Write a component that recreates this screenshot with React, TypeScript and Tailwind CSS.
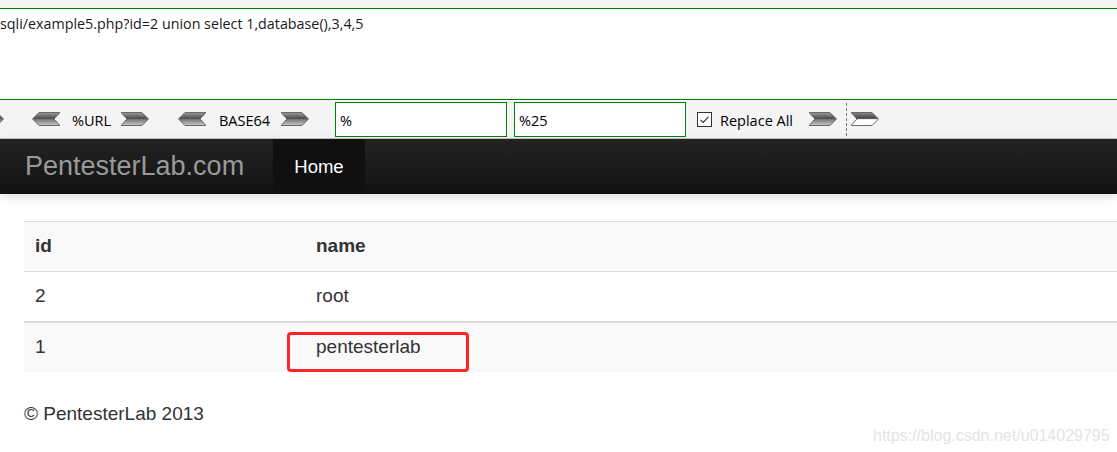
import React from 'react';

const ui = { fontFamily: '"Open Sans", "Noto Sans", sans-serif' };
const web = { fontFamily: '"Liberation Sans", Arial, sans-serif' };

function Arrow({ dir, hollow = false }: { dir: 'left' | 'right'; hollow?: boolean }) {
  const pts = dir === 'left' ? '7,0.5 28,0.5 22,7 28,13.5 7,13.5 0.5,7' : '0,0.5 21,0.5 27.5,7 21,13.5 0,13.5 6,7';
  const id = hollow ? 'arrHollow' : 'arrFill';
  return (
    <svg width="28" height="14" viewBox="0 0 28 14" className="shrink-0">
      <defs>
        <linearGradient id="arrFill" x1="0" y1="0" x2="0" y2="1">
          <stop offset="0" stopColor="#9c9c9c" />
          <stop offset="0.45" stopColor="#4f4f4f" />
          <stop offset="0.55" stopColor="#7c7c7c" />
          <stop offset="1" stopColor="#c9c9c9" />
        </linearGradient>
        <linearGradient id="arrHollow" x1="0" y1="0" x2="0" y2="1">
          <stop offset="0" stopColor="#8a8a8a" />
          <stop offset="0.45" stopColor="#444444" />
          <stop offset="0.55" stopColor="#ffffff" />
          <stop offset="1" stopColor="#ffffff" />
        </linearGradient>
      </defs>
      <polygon points={pts} fill={`url(#${id})`} stroke="#6a6a6a" strokeWidth="1" />
    </svg>
  );
}

export default function App() {
  return (
    <div className="relative w-[1117px] h-[452px] overflow-hidden bg-white">
      {/* browser chrome */}
      <div className="h-[8px] bg-[#f4f4f4]" />
      <div className="h-[92px] border-y border-[#008000] bg-white text-[14.3px] text-[#1a1a1a] pt-[4px] whitespace-nowrap" style={ui}>
        sqli/example5.php?id=2 union select 1,database(),3,4,5
      </div>

      {/* hackbar toolbar */}
      <div className="h-[39px] bg-[#f4f4f4] border-b border-[#c3c3c3] flex items-center text-[14.5px] text-black whitespace-nowrap" style={ui}>
        <div className="w-[4px] overflow-hidden ml-0 shrink-0">
          <div className="-ml-[24px]">
            <Arrow dir="right" />
          </div>
        </div>
        <div className="ml-[28px]"><Arrow dir="left" /></div>
        <span className="ml-[12px] w-[49px] pt-[3px]">%URL</span>
        <Arrow dir="right" />
        <div className="ml-[29px]"><Arrow dir="left" /></div>
        <span className="ml-[13px] w-[62px] pt-[3px]">BASE64</span>
        <Arrow dir="right" />
        <div className="ml-[26px] w-[172px] h-[35px] border border-[#008000] bg-white flex items-center px-[4px] pt-[3px]">%</div>
        <div className="ml-[7px] w-[172px] h-[35px] border border-[#008000] bg-white flex items-center px-[4px] pt-[3px]">%25</div>
        <div className="ml-[11px] w-[15px] h-[15px] border border-[#333] bg-white flex items-center justify-center">
          <svg width="11" height="11" viewBox="0 0 11 11">
            <path d="M1.5 5.8 L4.2 8.4 L9.6 2.6" fill="none" stroke="#333" strokeWidth="1.1" />
          </svg>
        </div>
        <span className="ml-[8px] w-[89px] pt-[3px]">Replace All</span>
        <Arrow dir="right" />
        <div className="ml-[9px] h-[33px] border-l border-dashed border-[#777]" />
        <div className="ml-[4px]"><Arrow dir="right" hollow /></div>
      </div>

      {/* navbar */}
      <div className="relative z-10 h-[55px] bg-gradient-to-b from-[#232323] to-[#121212] flex items-stretch shadow-[0_3px_10px_rgba(0,0,0,0.12)]" style={web}>
        <div className="pl-[25px] w-[273px] flex items-center text-[27px] text-[#999]">PentesterLab.com</div>
        <div className="w-[92px] bg-[#101010] flex items-center justify-center text-[18.5px] text-white">Home</div>
      </div>

      {/* content */}
      <div className="pl-[24px] pt-[27px] text-[19px] text-[#333]" style={web}>
        <div className="w-[1170px] border-t border-[#ddd]">
          <div className="flex h-[50px] items-center bg-[#f9f9f9] font-bold border-b border-[#ddd]">
            <div className="w-[281px] px-[11px]">id</div>
            <div className="px-[11px]">name</div>
          </div>
          <div className="flex h-[49px] items-center bg-white">
            <div className="w-[281px] px-[11px]">2</div>
            <div className="px-[11px]">root</div>
          </div>
          <div className="flex h-[51px] items-center bg-[#f9f9f9] border-t-2 border-[#ddd]">
            <div className="w-[281px] px-[11px]">1</div>
            <div className="px-[11px]">pentesterlab</div>
          </div>
        </div>
        <div className="pt-[28px]">© PentesterLab 2013</div>
      </div>

      {/* annotation */}
      <div className="absolute left-[287px] top-[332px] w-[182px] h-[40px] border-[3px] border-[#ff2323] rounded-[4px]" />

      {/* watermark */}
      <div className="absolute left-[873px] top-[424px] text-[16px] text-[#e4e4e4] whitespace-nowrap" style={web}>
        https://blog.csdn.net/u014029795
      </div>
    </div>
  );
}
